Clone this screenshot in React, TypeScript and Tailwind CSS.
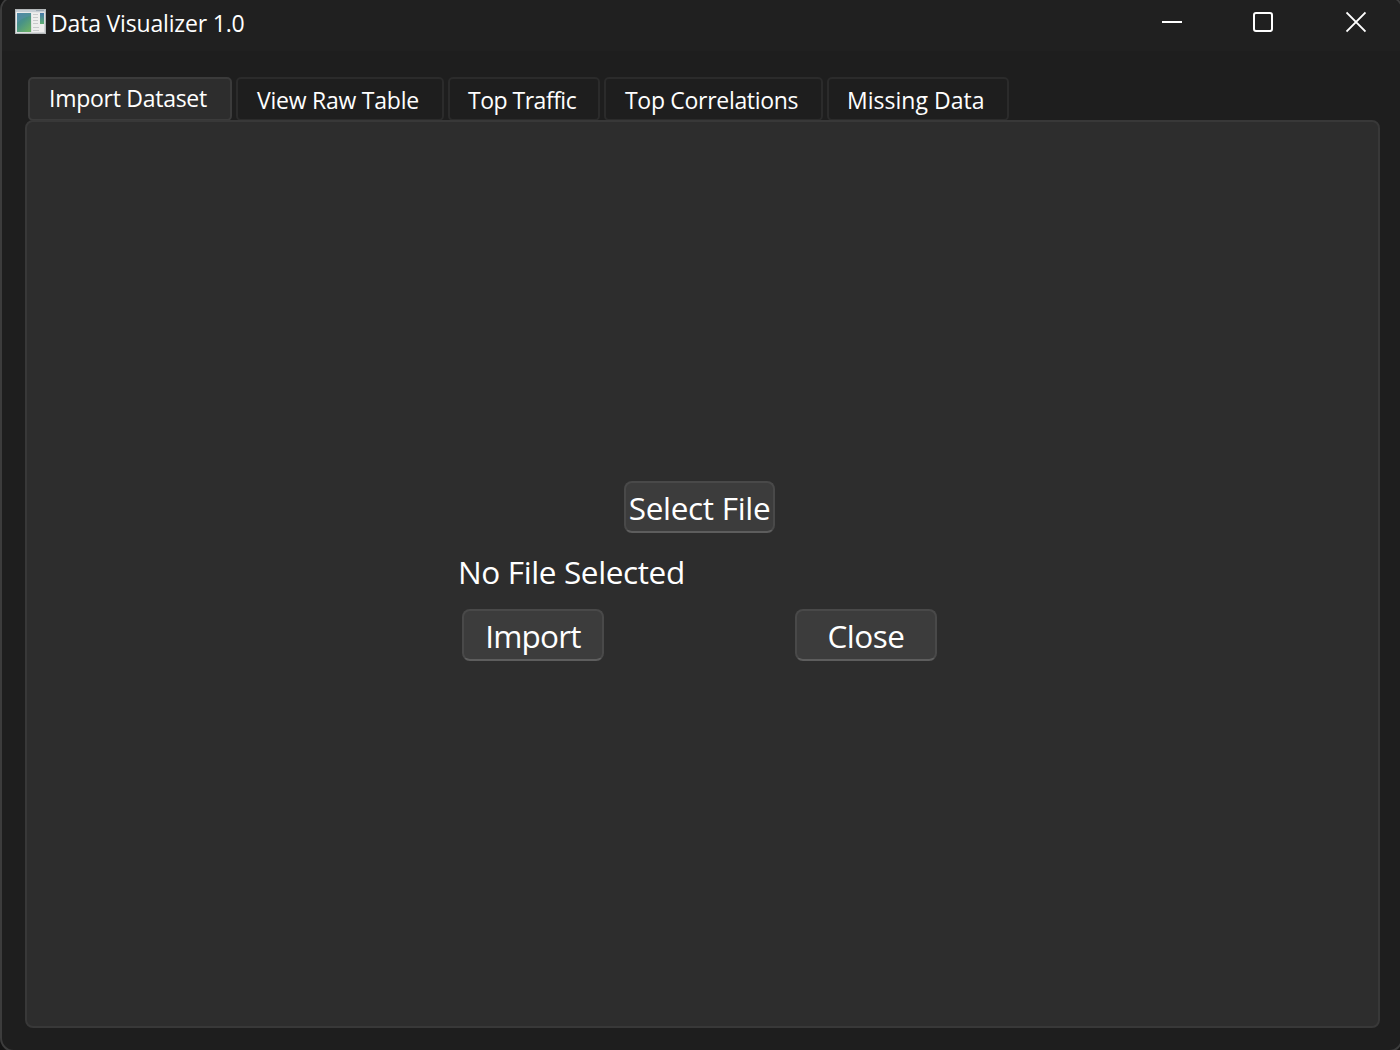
const tabs = [
  { label: 'Import Dataset', box: 'w-[204px]', text: 'pl-[19px] tracking-[-0.27px]' },
  { label: 'View Raw Table', box: 'w-[208px]', text: 'pl-[19px] tracking-[-0.24px]' },
  { label: 'Top Traffic', box: 'w-[152px]', text: 'pl-[18px] tracking-[-0.5px]' },
  { label: 'Top Correlations', box: 'w-[219px]', text: 'pl-[19px] tracking-[-0.3px]' },
  { label: 'Missing Data', box: 'w-[182px]', text: 'pl-[18px] tracking-[0.02px]' },
];

function AppIcon() {
  return (
    <svg width="32" height="27" viewBox="0 0 32 27" className="block shrink-0">
      <defs>
        <linearGradient id="pane" x1="0" y1="0" x2="0.7" y2="1">
          <stop offset="0" stopColor="#477fa5" />
          <stop offset="0.5" stopColor="#489287" />
          <stop offset="1" stopColor="#69ae68" />
        </linearGradient>
        <linearGradient id="side" x1="0" y1="0" x2="0" y2="1">
          <stop offset="0" stopColor="#4478a8" />
          <stop offset="1" stopColor="#5fae72" />
        </linearGradient>
        <linearGradient id="frame" x1="0" y1="0" x2="1" y2="1">
          <stop offset="0" stopColor="#f2f2f2" />
          <stop offset="1" stopColor="#d0d2d4" />
        </linearGradient>
      </defs>
      <rect x="0.5" y="0.5" width="30" height="24" fill="url(#frame)" stroke="#b4b8ba" />
      <path d="M1 1H30V3H1z" fill="#c6ced4" />
      <path d="M21 1.5h8" stroke="#9eabb4" />
      <rect x="2" y="4" width="14" height="19" fill="url(#pane)" />
      <path d="M2 14Q8 8 16 7V4H2z" fill="#5b91ad" opacity="0.45" />
      <rect x="17" y="4" width="12" height="19" fill="#eeeeed" />
      <path d="M18 5.5h5M18 8.5h5M18 11.5h5M18 14.5h5M18 18.5h6M18 21.5h6" stroke="#c8cacb" strokeWidth="1.2" />
      <rect x="25" y="4" width="4" height="11" fill="url(#side)" />
    </svg>
  );
}

function PushButton({ label, className }: { label: string; className: string }) {
  return (
    <button
      className={
        'flex h-[52px] items-center justify-center rounded-[8px] border-2 border-[#494949] border-b-[#5d5d5d] bg-[#3c3c3c] pt-[2px] text-[31.5px] leading-none whitespace-nowrap ' +
        className
      }
    >
      {label}
    </button>
  );
}

export default function App() {
  return (
    <div className="h-[1050px] w-[1400px] overflow-hidden bg-[#151515] font-['Open_Sans',sans-serif] text-white">
      <div className="-mt-1 flex h-[1056px] w-[1403px] flex-col overflow-hidden rounded-[14px] border-2 border-[#3c3c3c] bg-[#1e1e1e]">
        <header className="flex h-[53px] shrink-0 items-start bg-[#202020] pl-[13px]">
          <div className="mt-[11px] flex h-[27px] items-center">
            <AppIcon />
            <h1 className="ml-[4px] pt-[1px] text-[23px] leading-none tracking-[-0.17px] whitespace-nowrap">Data Visualizer 1.0</h1>
          </div>
          <div className="mt-[12px] mr-[35px] ml-auto flex">
            <svg width="20" height="24" className="mr-[71px]" fill="none">
              <path d="M0 12H20" stroke="white" strokeWidth="2" />
            </svg>
            <svg width="20" height="24" className="mr-[73px]" fill="none">
              <rect x="1" y="3" width="18" height="18" rx="2" stroke="white" strokeWidth="2" />
            </svg>
            <svg width="20" height="24" fill="none">
              <path d="M0.5 2.5L19.5 21.5M19.5 2.5L0.5 21.5" stroke="white" strokeWidth="1.8" />
            </svg>
          </div>
        </header>

        <nav className="mt-[26px] ml-[26px] flex h-[44px] shrink-0 gap-[4px] text-[23px] leading-none">
          {tabs.map((tab, i) => (
            <button
              key={tab.label}
              className={
                'flex items-center rounded-[5px] border-2 whitespace-nowrap ' +
                (i === 0 ? 'border-[#3b3b3b] bg-[#2d2d2d] pb-[1px] ' : 'border-[#2b2b2b] bg-[#1e1e1e] pt-[3px] ') +
                tab.box
              }
            >
              <span className={tab.text}>{tab.label}</span>
            </button>
          ))}
        </nav>

        <main className="-mt-px ml-[23px] h-[908px] w-[1355px] shrink-0 rounded-[8px] border-2 border-[#383838] bg-[#2d2d2d]">
          <section className="mt-[359px] ml-[431px] w-[483px]">
            <PushButton label="Select File" className="ml-[166px] w-[151px] tracking-[-0.3px]" />
            <p className="mt-[22px] h-[34px] text-[31.5px] leading-[34px] tracking-[-0.37px] whitespace-nowrap">No File Selected</p>
            <div className="mt-[20px] flex justify-between pr-[4px] pl-[4px]">
              <PushButton label="Import" className="w-[142px] tracking-[-0.8px]" />
              <PushButton label="Close" className="w-[142px] tracking-[-0.5px]" />
            </div>
          </section>
        </main>
      </div>
    </div>
  );
}
